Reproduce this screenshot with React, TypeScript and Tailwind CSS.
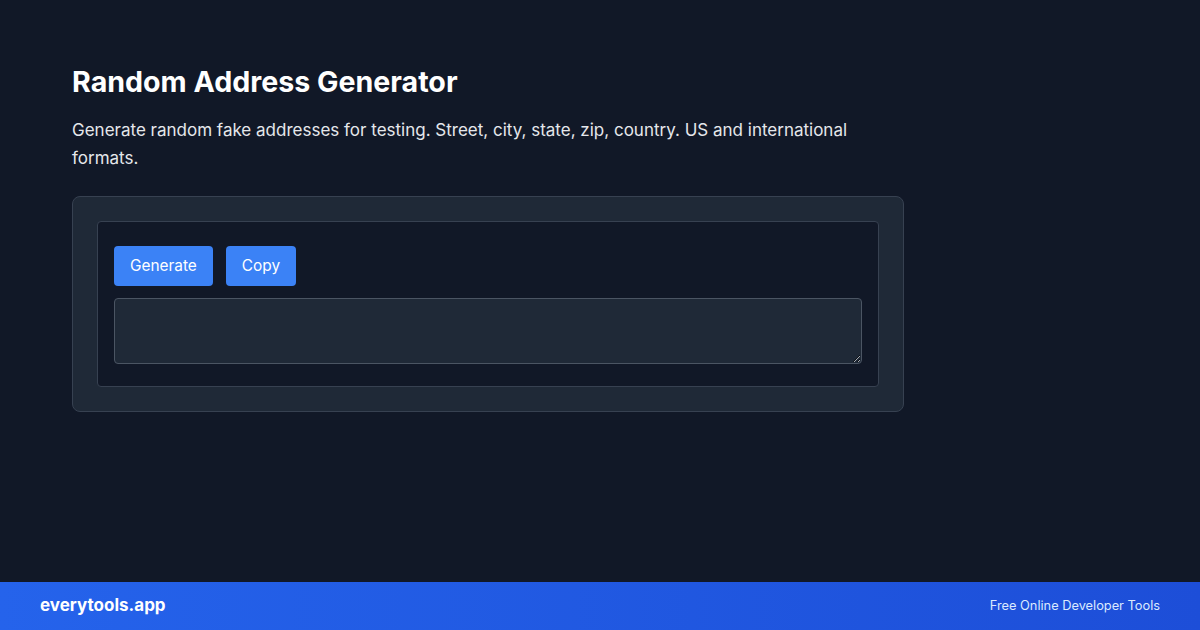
export default function App() {
  return (
    <div
      className="h-[630px] w-full flex flex-col bg-[#111827] text-white"
      style={{ fontFamily: "Inter, 'Noto Sans', sans-serif" }}
    >
      <main className="flex-1 px-[72px] pt-16">
        <div className="max-w-[832px]">
          <h1 className="text-[28.6px] leading-9 font-bold">Random Address Generator</h1>
          <p className="mt-4 text-[17px] leading-7 text-[#e5e7eb]">
            Generate random fake addresses for testing. Street, city, state, zip, country. US and
            international formats.
          </p>
          <div className="mt-6 rounded-lg border border-[#374151] bg-[#1f2937] p-6">
            <div className="rounded border border-[#374151] bg-[#111827] px-4 pt-6 pb-[22px]">
              <div className="flex gap-[13px]">
                <button className="h-10 rounded bg-[#3b82f6] px-4 text-[15.4px] text-white">Generate</button>
                <button className="h-10 rounded bg-[#3b82f6] px-4 text-[15.4px] text-white">Copy</button>
              </div>
              <textarea className="mt-3 block h-[66px] w-full rounded border border-[#4b5563] bg-[#1f2937] p-2 text-white" />
            </div>
          </div>
        </div>
      </main>
      <footer className="flex h-12 items-center justify-between bg-gradient-to-r from-[#2563eb] to-[#1d4ed8] px-10">
        <span className="text-[17px] font-bold">everytools.app</span>
        <span className="text-[12.8px] text-[#dbeafe]">Free Online Developer Tools</span>
      </footer>
    </div>
  );
}
